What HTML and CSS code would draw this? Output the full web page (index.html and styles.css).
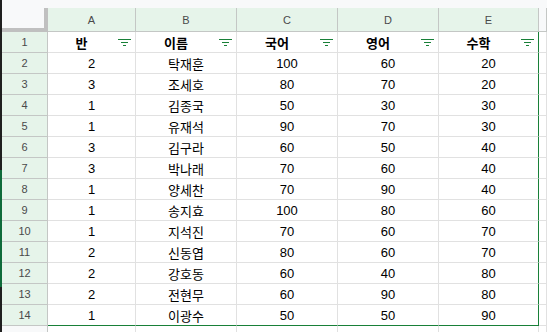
FILE: index.html
```html
<!DOCTYPE html>
<html lang="ko">
<head>
<meta charset="utf-8">
<title>Sheet</title>
<link rel="stylesheet" href="styles.css">
</head>
<body>
<div class="frame">
  <div class="edge"></div>
  <div class="main">
    <div class="topbar"></div>
    <div class="sheet">
      <div class="corner"></div>
      <div class="ch sel">A</div>
      <div class="ch sel">B</div>
      <div class="ch sel">C</div>
      <div class="ch sel">D</div>
      <div class="ch sel">E</div>
      <div class="ch"></div>

      <div class="rh sel">1</div>
      <div class="c hd">반<svg class="flt" viewBox="0 0 13 7" width="13" height="7"><path d="M0 0.5H13M3 3.5H10M5 6.5H8" stroke="#188038" stroke-width="1"/></svg></div>
      <div class="c hd">이름<svg class="flt" viewBox="0 0 13 7" width="13" height="7"><path d="M0 0.5H13M3 3.5H10M5 6.5H8" stroke="#188038" stroke-width="1"/></svg></div>
      <div class="c hd">국어<svg class="flt" viewBox="0 0 13 7" width="13" height="7"><path d="M0 0.5H13M3 3.5H10M5 6.5H8" stroke="#188038" stroke-width="1"/></svg></div>
      <div class="c hd">영어<svg class="flt" viewBox="0 0 13 7" width="13" height="7"><path d="M0 0.5H13M3 3.5H10M5 6.5H8" stroke="#188038" stroke-width="1"/></svg></div>
      <div class="c hd re">수학<svg class="flt" viewBox="0 0 13 7" width="13" height="7"><path d="M0 0.5H13M3 3.5H10M5 6.5H8" stroke="#188038" stroke-width="1"/></svg></div>
      <div class="c"></div>

      <div class="rh sel">2</div><div class="c">2</div><div class="c">탁재훈</div><div class="c">100</div><div class="c">60</div><div class="c re">20</div><div class="c"></div>
      <div class="rh sel">3</div><div class="c">3</div><div class="c">조세호</div><div class="c">80</div><div class="c">70</div><div class="c re">20</div><div class="c"></div>
      <div class="rh sel">4</div><div class="c">1</div><div class="c">김종국</div><div class="c">50</div><div class="c">30</div><div class="c re">30</div><div class="c"></div>
      <div class="rh sel">5</div><div class="c">1</div><div class="c">유재석</div><div class="c">90</div><div class="c">70</div><div class="c re">30</div><div class="c"></div>
      <div class="rh sel">6</div><div class="c">3</div><div class="c">김구라</div><div class="c">60</div><div class="c">50</div><div class="c re">40</div><div class="c"></div>
      <div class="rh sel">7</div><div class="c">3</div><div class="c">박나래</div><div class="c">70</div><div class="c">60</div><div class="c re">40</div><div class="c"></div>
      <div class="rh sel">8</div><div class="c">1</div><div class="c">양세찬</div><div class="c">70</div><div class="c">90</div><div class="c re">40</div><div class="c"></div>
      <div class="rh sel">9</div><div class="c">1</div><div class="c">송지효</div><div class="c">100</div><div class="c">80</div><div class="c re">60</div><div class="c"></div>
      <div class="rh sel">10</div><div class="c">1</div><div class="c">지석진</div><div class="c">70</div><div class="c">60</div><div class="c re">70</div><div class="c"></div>
      <div class="rh sel">11</div><div class="c">2</div><div class="c">신동엽</div><div class="c">80</div><div class="c">60</div><div class="c re">70</div><div class="c"></div>
      <div class="rh sel">12</div><div class="c">2</div><div class="c">강호동</div><div class="c">60</div><div class="c">40</div><div class="c re">80</div><div class="c"></div>
      <div class="rh sel">13</div><div class="c">2</div><div class="c">전현무</div><div class="c">60</div><div class="c">90</div><div class="c re">80</div><div class="c"></div>
      <div class="rh sel">14</div><div class="c be">1</div><div class="c be">이광수</div><div class="c be">50</div><div class="c be">50</div><div class="c be re">90</div><div class="c"></div>
      <div class="rh">15</div><div class="c"></div><div class="c"></div><div class="c"></div><div class="c"></div><div class="c"></div><div class="c"></div>
    </div>
  </div>
</div>
</body>
</html>
```
FILE: styles.css
```css
html, body {
  margin: 0;
  padding: 0;
  background: #ffffff;
  overflow: hidden;
  height: 332px;
}
.frame {
  display: flex;
  width: 547px;
  height: 332px;
  overflow: hidden;
  font-family: "Liberation Sans", "Noto Sans CJK KR", Arial, sans-serif;
}
.edge {
  flex: 0 0 2px;
  background: linear-gradient(to bottom, #1f1f1f 0, #1f1f1f 170px, #0f6b3a 170px, #0f6b3a 287px, #1f1f1f 287px);
}
.main {
  flex: 1;
  min-width: 0;
}
.topbar {
  height: 8px;
  background: #f8f9fa;
}
.sheet {
  display: grid;
  grid-template-columns: 46px 88px 101px 101px 101px 100px 1fr;
  grid-template-rows: 24px repeat(15, 21px);
}
.sheet > div {
  box-sizing: border-box;
  display: flex;
  align-items: center;
  justify-content: center;
  overflow: hidden;
  white-space: nowrap;
}
.corner {
  background: #f8f9fa;
  border-right: 4px solid #c0c0c0;
  border-bottom: 4px solid #c0c0c0;
}
.ch {
  background: #f8f9fa;
  border-right: 1px solid #c4c7c5;
  border-bottom: 1px solid #c4c7c5;
  font-size: 11px;
  color: #4a4a4a;
  padding-top: 1px;
}
.rh {
  background: #f8f9fa;
  border-right: 1px solid #c4c7c5;
  border-bottom: 1px solid #c4c7c5;
  font-size: 11px;
  color: #4a4a4a;
}
.ch.sel, .rh.sel {
  background: #e6f4ea;
}
.c {
  border-right: 1px solid #e1e1e1;
  border-bottom: 1px solid #e1e1e1;
  font-size: 13px;
  color: #000000;
  background: #ffffff;
}
.c.hd {
  position: relative;
  font-weight: bold;
  padding-right: 20px;
}
.flt {
  position: absolute;
  right: 4px;
  top: 7px;
}
.c.re {
  border-right: 1px solid #188038;
}
.c.be {
  border-bottom: 1px solid #188038;
}
```
